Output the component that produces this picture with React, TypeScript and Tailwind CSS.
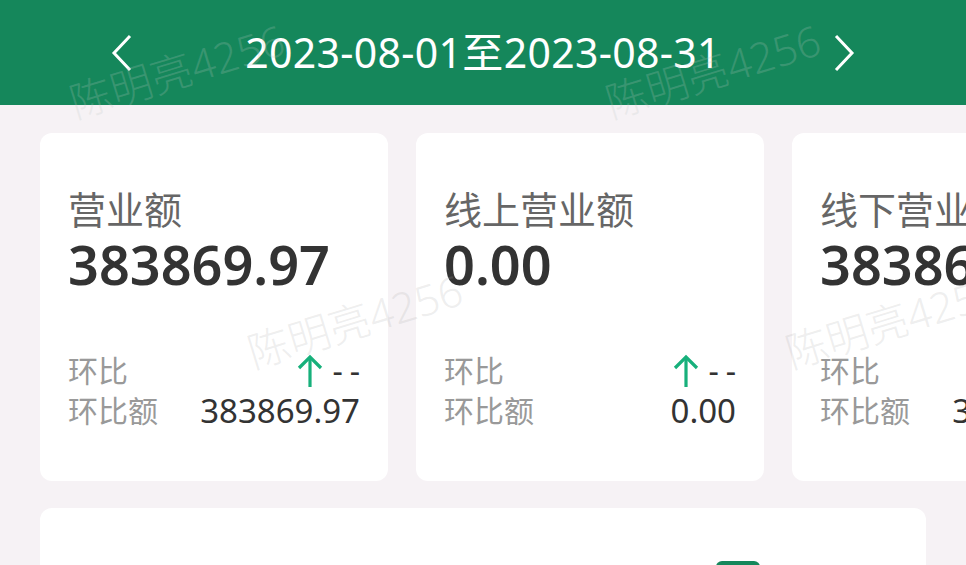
import React from "react";

const cards = [
    { title: "营业额", value: "383869.97", diff: "383869.97" },
    { title: "线上营业额", value: "0.00", diff: "0.00" },
    { title: "线下营业额", value: "383869.97", diff: "383869.97" },
];

function UpArrow() {
    return (
        <svg width="28" height="34" viewBox="0 0 28 34" fill="none" stroke="#17b07b" strokeWidth="3.2" strokeLinecap="butt">
            <path d="M14 3 V33" />
            <path d="M3 14 L14 3 L25 14" />
        </svg>
    );
}

function Watermark({ className }: { className: string }) {
    return (
        <div className={`absolute pointer-events-none select-none text-[42px] font-light leading-none whitespace-nowrap -rotate-[17deg] ${className}`}>
            陈明亮4256
        </div>
    );
}

function StatCard({ title, value, diff }: { title: string; value: string; diff: string }) {
    return (
        <div className="shrink-0 w-[348px] h-[348px] bg-white rounded-[12px] flex flex-col px-[28px] pt-[54px] pb-[52px]">
            <div className="text-[38px] leading-[44px] text-[#666666]">{title}</div>
            <div className="text-[54px] leading-[62px] font-semibold text-[#333333] mt-[2px] whitespace-nowrap">{value}</div>
            <div className="mt-auto flex flex-col">
                <div className="flex items-center justify-between h-[37px] -mt-[3px] mb-[3px]">
                    <span className="text-[30px] text-[#999999]">环比</span>
                    <span className="flex items-center gap-[8px] text-[#333333] text-[32px]">
                        <UpArrow />
                        <span className="tracking-[7px] -mr-[7px]">--</span>
                    </span>
                </div>
                <div className="flex items-center justify-between h-[37px]">
                    <span className="text-[30px] text-[#999999]">环比额</span>
                    <span className="text-[33px] text-[#333333]">{diff}</span>
                </div>
            </div>
        </div>
    );
}

export default function App() {
    return (
        <div
            className="relative w-[966px] h-[565px] overflow-hidden bg-[#f6f2f5]"
            style={{ fontFamily: '"Noto Sans", "Noto Sans CJK SC", sans-serif' }}
        >
            {/* Date range header */}
            <div className="h-[105px] bg-[#15875b] flex items-center justify-center gap-[112px]">
                <svg width="22" height="38" viewBox="0 0 22 38" fill="none" stroke="white" strokeWidth="3">
                    <path d="M19 2 L3 19 L19 36" />
                </svg>
                <span className="text-white text-[41px] leading-none tracking-[0.3px]">2023-08-01至2023-08-31</span>
                <svg width="22" height="38" viewBox="0 0 22 38" fill="none" stroke="white" strokeWidth="3">
                    <path d="M3 2 L19 19 L3 36" />
                </svg>
            </div>

            {/* Stat cards */}
            <div className="flex gap-[28px] pl-[40px] mt-[28px]">
                {cards.map((c) => (
                    <StatCard key={c.title} {...c} />
                ))}
            </div>

            {/* Lower panel */}
            <div className="mx-[40px] w-[886px] mt-[27px] h-[80px] bg-white rounded-t-[12px] relative">
                <div className="absolute left-[676px] top-[53px] w-[44px] h-[20px] rounded-t-[6px] bg-[#15875b]" />
            </div>

            <Watermark className="left-[66px] top-[50px] text-[rgba(190,200,195,0.22)]" />
            <Watermark className="left-[602px] top-[50px] text-[rgba(190,200,195,0.22)]" />
            <Watermark className="left-[244px] top-[300px] text-[rgba(170,170,170,0.2)]" />
            <Watermark className="left-[782px] top-[300px] text-[rgba(170,170,170,0.2)]" />
        </div>
    );
}
